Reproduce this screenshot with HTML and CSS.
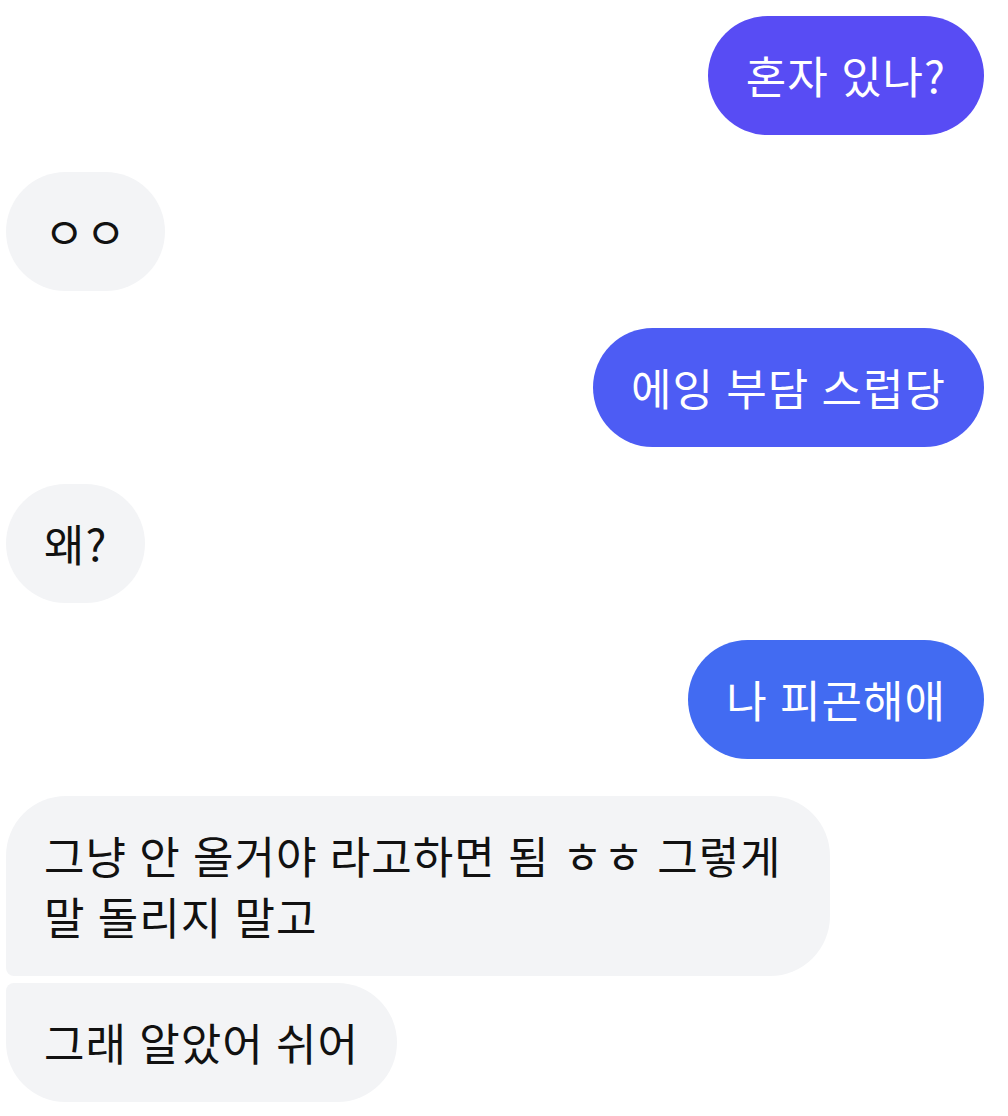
FILE: index.html
```html
<!DOCTYPE html>
<html lang="ko">

<head>
    <meta charset="utf8">
    <title>채팅</title>
    <link rel="stylesheet" href="styles.css">
</head>

<body>
    <div class="chat">
        <div class="msg me tone-1">혼자 있나?</div>
        <div class="msg them">ㅇㅇ</div>
        <div class="msg me tone-2">에잉 부담 스럽당</div>
        <div class="msg them">왜?</div>
        <div class="msg me tone-3">나 피곤해애</div>
        <div class="group">
            <div class="msg them first">그냥 안 올거야 라고하면 됨 ㅎㅎ 그렇게 말 돌리지 말고</div>
            <div class="msg them last">그래 알았어 쉬어</div>
        </div>
    </div>
</body>

</html>
```

FILE: styles.css
```css
* {
    box-sizing: border-box;
}

body {
    margin: 0;
    background: white;
    font-family: "Noto Sans CJK KR", "Noto Sans", sans-serif;
    font-size: 44px;
    color: #111;
}

.chat {
    display: flex;
    flex-direction: column;
    row-gap: 37px;
    padding: 16px 24px 16px 6px;
}

.group {
    display: flex;
    flex-direction: column;
    row-gap: 7px;
}

.msg {
    max-width: 824px;
    padding: 29px 38px;
    line-height: 61px;
    border-radius: 60px;
    letter-spacing: 1px;
    word-spacing: -1px;
}

.msg.me {
    align-self: flex-end;
    color: white;
}

.msg.them {
    align-self: flex-start;
    background-color: #f3f4f6;
}

.tone-1 {
    background-color: #584cf4;
}

.tone-2 {
    background-color: #4d5cf4;
}

.tone-3 {
    background-color: #426bf2;
}

.msg.them.first {
    border-radius: 60px 60px 60px 8px;
}

.msg.them.last {
    border-radius: 8px 60px 60px 60px;
}
```
